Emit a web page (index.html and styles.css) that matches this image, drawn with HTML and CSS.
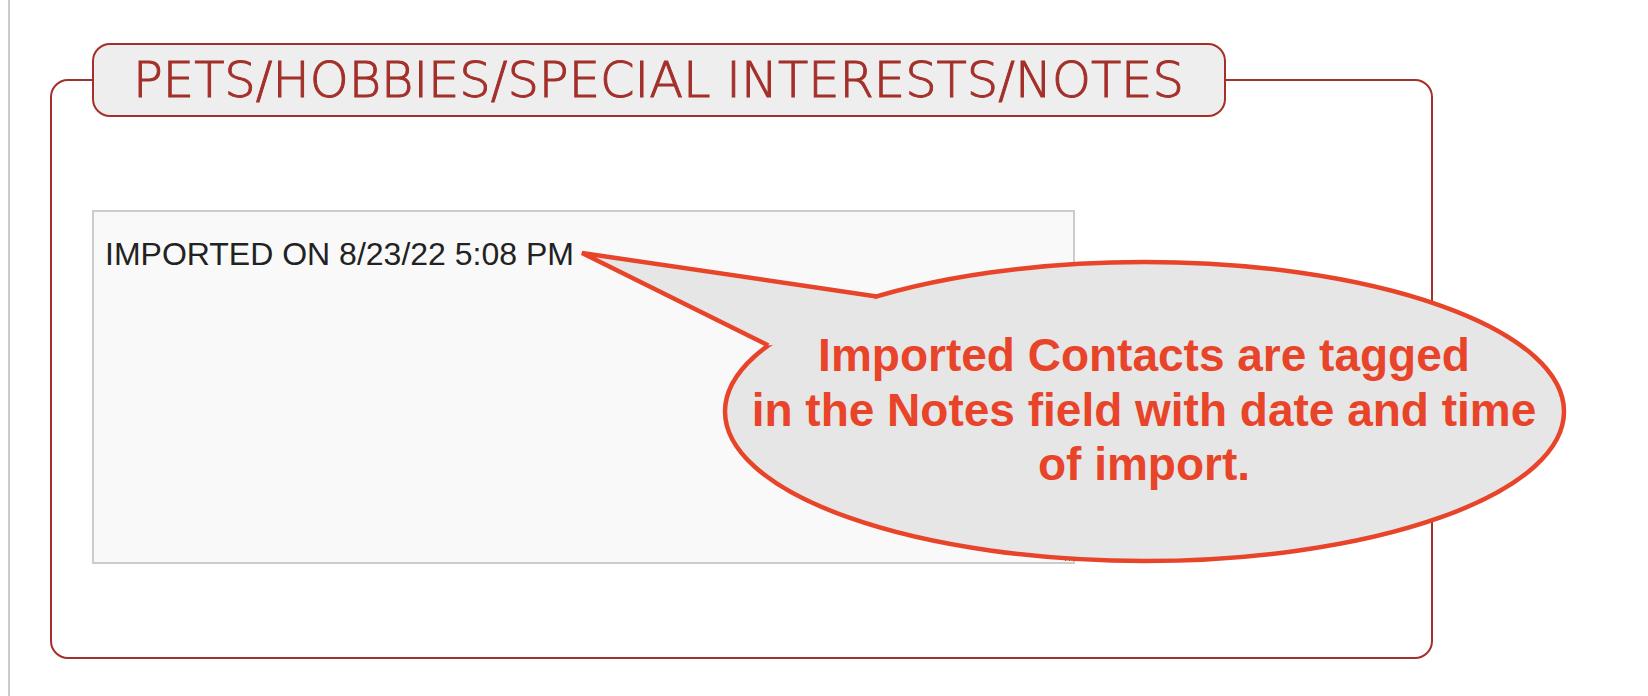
FILE: index.html
```html
<!DOCTYPE html>
<html lang="en">
<head>
    <meta charset="UTF-8">
    <meta name="viewport" content="width=device-width, initial-scale=1.0">
    <title>Contact Notes</title>
    <link rel="stylesheet" href="styles.css">
</head>
<body>
    <!-- Main column, gray rule on the left -->
    <div class="page">
        <fieldset class="notes-box">
            <legend class="notes-title">PETS/HOBBIES/SPECIAL INTERESTS/NOTES</legend>
            <textarea class="notes-field">IMPORTED ON 8/23/22 5:08 PM</textarea>
        </fieldset>
    </div>

    <!-- Annotation bubble laid over the form -->
    <div class="callout">
        <svg class="callout-shape" width="1648" height="696" viewBox="0 0 1648 696">
            <ellipse cx="1144.5" cy="411.5" rx="419.5" ry="149.5" fill="#e6e6e6" stroke="#e8442a" stroke-width="4.5"/>
            <polygon points="582,253 876.7,296.4 850,335 768.3,345.4" fill="#e6e6e6"/>
            <polyline points="876.7,296.4 582,253 768.3,345.4" fill="none" stroke="#e8442a" stroke-width="4.5" stroke-linejoin="miter"/>
        </svg>
        <div class="callout-text">
            Imported Contacts are tagged<br>
            in the Notes field with date and time<br>
            of import.
        </div>
    </div>
</body>
</html>
```

FILE: styles.css
```css
/* Basic page */
body {
    margin: 0;
    padding: 0;
    background-color: #fff;
    font-family: "Liberation Sans", Arial, sans-serif;
    position: relative;
    overflow: hidden;
}
.page {
    margin-left: 8px;
    border-left: 2px solid #ccc;
    min-height: 100vh;
    padding: 43px 0 0 40px;
    box-sizing: border-box;
}
/* Notes section */
.notes-box {
    margin: 0;
    width: 1383px;
    box-sizing: border-box;
    border: 2px solid #a3302a;
    border-radius: 18px;
    padding: 93px 40px 93px 40px;
}
.notes-title {
    margin: 0;
    padding: 0 40px 0 39px;
    border: 2px solid #a3302a;
    border-radius: 18px;
    background-color: #eee;
    color: #a3302a;
    font-family: "DejaVu Sans", sans-serif;
    font-weight: 300;
    font-size: 49.5px;
    line-height: 70px;
    -webkit-text-stroke: 1px #a3302a;
}
.notes-field {
    display: block;
    width: 983px;
    height: 354px;
    box-sizing: border-box;
    margin: 0;
    padding: 24px 11px;
    border: 2px solid #ccc;
    background-color: #f9f9f9;
    color: #222;
    font-family: "Liberation Sans", Arial, sans-serif;
    font-size: 32px;
    outline: none;
}
/* Annotation callout */
.callout {
    position: absolute;
    top: 0;
    left: 0;
    width: 1648px;
    height: 696px;
    pointer-events: none;
}
.callout-shape {
    display: block;
}
.callout-text {
    position: absolute;
    top: 328px;
    left: 744px;
    width: 800px;
    text-align: center;
    color: #e8442a;
    font-family: "Liberation Sans", Arial, sans-serif;
    font-weight: bold;
    font-size: 46px;
    line-height: 54.5px;
}
```
